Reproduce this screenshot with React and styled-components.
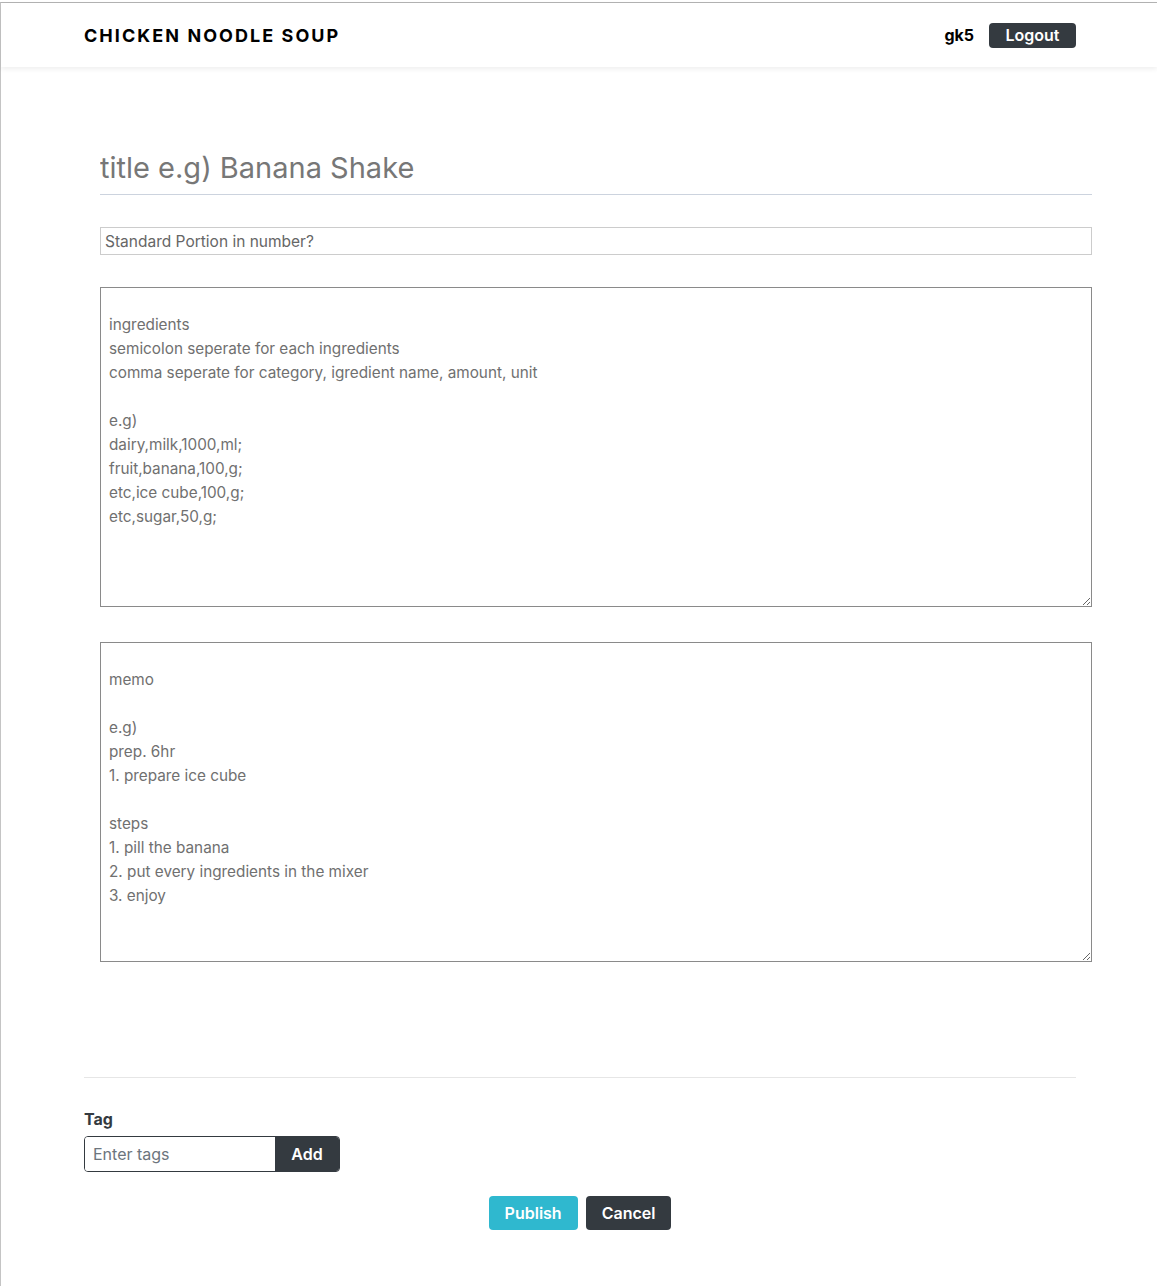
import React from 'react';
import styled, { createGlobalStyle } from 'styled-components';

const GlobalStyle = createGlobalStyle`
  html, body {
    margin: 0;
    padding: 0;
    background: #fff;
  }
  body {
    font-family: Inter, "Noto Sans", "Liberation Sans", sans-serif;
    color: #212529;
  }
`;

const Page = styled.div`
  min-height: 1284px;
  border-top: 1px solid #b4b4b4;
  border-left: 1px solid #c4c4c4;
  margin-top: 2px;
  box-sizing: border-box;
`;

const Header = styled.header`
  height: 64px;
  background: #fff;
  box-shadow: 0 2px 5px rgba(0, 0, 0, 0.07);
  display: flex;
  align-items: center;
`;

const HeaderInner = styled.div`
  width: 992px;
  margin-left: 83px;
  display: flex;
  align-items: center;
  justify-content: space-between;
`;

const Brand = styled.div`
  font-size: 18px;
  font-weight: 700;
  letter-spacing: 2.05px;
  color: #000;
`;

const UserBox = styled.div`
  display: flex;
  align-items: center;
  gap: 15px;
`;

const UserName = styled.span`
  font-size: 16px;
  font-weight: 700;
  color: #000;
`;

const Button = styled.button`
  font-family: inherit;
  border: none;
  border-radius: 4px;
  color: #fff;
  font-weight: 600;
  font-size: 16px;
  cursor: pointer;
  background: ${props => (props.variant === 'info' ? '#2fb8cf' : '#343a40')};
  height: ${props => props.h || 34}px;
  padding: 0 ${props => props.px || 16}px;
`;

const Editor = styled.div`
  width: 992px;
  margin: 78px 0 0 99px;
  display: flex;
  flex-direction: column;
`;

const TitleInput = styled.input`
  font-family: inherit;
  font-size: 29px;
  border: none;
  border-bottom: 1px solid #ccd3de;
  height: 45px;
  padding: 0 0 4px;
  outline: none;
  color: #444;
  &::placeholder {
    color: #777;
  }
`;

const PortionInput = styled.input`
  font-family: inherit;
  font-size: 15.5px;
  border: 1px solid #cccccc;
  height: 28px;
  box-sizing: border-box;
  padding: 0 4px;
  margin-top: 32px;
  outline: none;
  &::placeholder {
    color: #666;
  }
`;

const BodyArea = styled.textarea`
  font-family: inherit;
  font-size: 15.3px;
  line-height: 24px;
  border: 1px solid #8a8a8a;
  height: 320px;
  box-sizing: border-box;
  padding: 1px 8px;
  margin-top: ${props => props.gap}px;
  resize: vertical;
  outline: none;
  &::placeholder {
    color: #707070;
  }
`;

const Footer = styled.div`
  width: 992px;
  margin: 115px 0 0 83px;
`;

const Rule = styled.hr`
  border: none;
  border-top: 1px solid #e6e6e6;
  margin: 0;
`;

const TagLabel = styled.div`
  font-size: 16px;
  font-weight: 700;
  color: #343a40;
  margin-top: 31px;
`;

const TagGroup = styled.div`
  display: flex;
  width: 256px;
  height: 36px;
  margin-top: 7px;
  border: 1px solid #343a40;
  border-radius: 4px;
  overflow: hidden;
  box-sizing: border-box;
`;

const TagInput = styled.input`
  flex: 1;
  min-width: 0;
  font-family: inherit;
  font-size: 16px;
  border: none;
  padding: 0 8px;
  outline: none;
  &::placeholder {
    color: #6c757d;
  }
`;

const AddButton = styled.button`
  width: 64px;
  border: none;
  background: #343a40;
  color: #fff;
  font-family: inherit;
  font-weight: 600;
  font-size: 16px;
`;

const Actions = styled.div`
  display: flex;
  justify-content: center;
  gap: 8px;
  margin-top: 24px;
`;

const ingredientsHint =
  '\ningredients\nsemicolon seperate for each ingredients\ncomma seperate for category, igredient name, amount, unit\n\ne.g)\ndairy,milk,1000,ml;\nfruit,banana,100,g;\netc,ice cube,100,g;\netc,sugar,50,g;';

const memoHint =
  '\nmemo\n\ne.g)\nprep. 6hr\n1. prepare ice cube\n\nsteps\n1. pill the banana\n2. put every ingredients in the mixer\n3. enjoy';

export default function App() {
  return (
    <>
      <GlobalStyle />
      <Page>
        <Header>
          <HeaderInner>
            <Brand>CHICKEN NOODLE SOUP</Brand>
            <UserBox>
              <UserName>gk5</UserName>
              <Button h={25} px={16.5}>Logout</Button>
            </UserBox>
          </HeaderInner>
        </Header>

        <Editor>
          <TitleInput placeholder="title e.g) Banana Shake" />
          <PortionInput placeholder="Standard Portion in number?" />
          <BodyArea gap={32} placeholder={ingredientsHint} />
          <BodyArea gap={35} placeholder={memoHint} />
        </Editor>

        <Footer>
          <Rule />
          <TagLabel>Tag</TagLabel>
          <TagGroup>
            <TagInput placeholder="Enter tags" />
            <AddButton>Add</AddButton>
          </TagGroup>
          <Actions>
            <Button variant="info">Publish</Button>
            <Button>Cancel</Button>
          </Actions>
        </Footer>
      </Page>
    </>
  );
}
